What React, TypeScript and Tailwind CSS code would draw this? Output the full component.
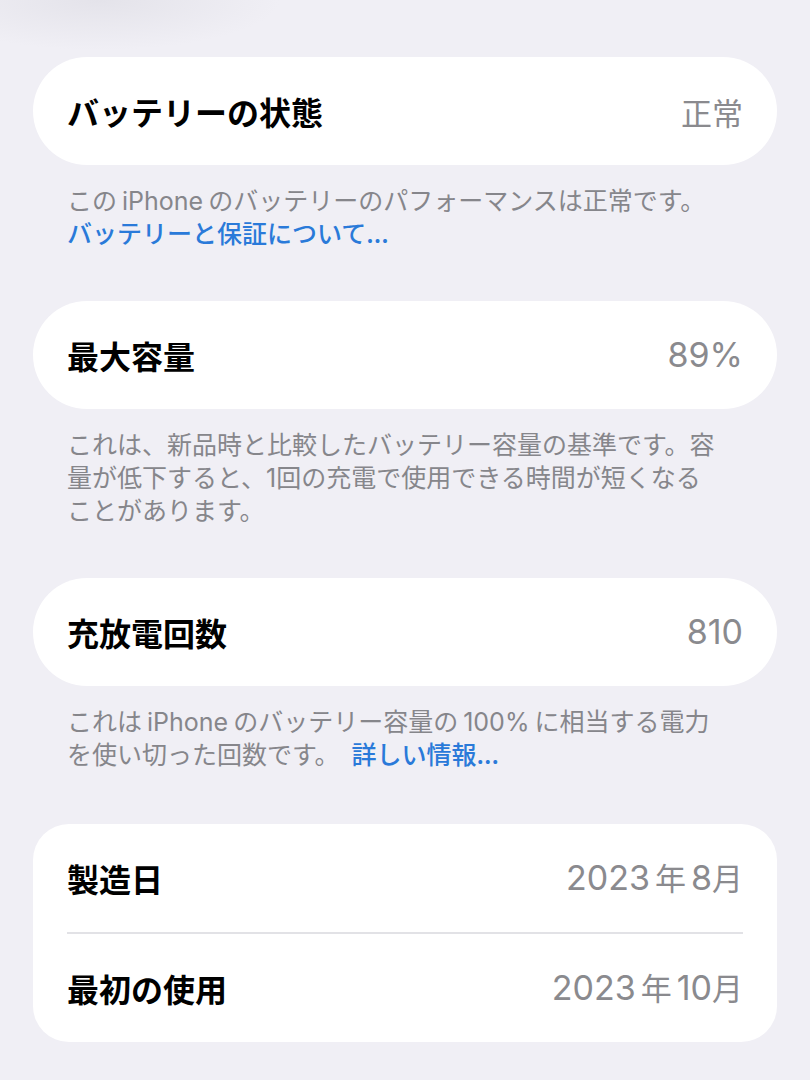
const font = { fontFamily: '"Noto Sans CJK JP", "Noto Sans", sans-serif' };
const latin = { fontFamily: 'Inter, "Noto Sans CJK JP", sans-serif' };

function Row({ label, value }: { label: string; value: React.ReactNode }) {
  return (
    <div className="flex h-[108px] items-center justify-between px-[34px]">
      <span className="text-[32px] font-bold leading-none text-black">{label}</span>
      <span className="text-[31px] leading-none text-[#8a8a8e]">{value}</span>
    </div>
  );
}

// digits in the value column run a bit larger than the kanji
function N({ children }: { children: React.ReactNode }) {
  return (
    <span style={latin} className="text-[34px] leading-none">
      {children}
    </span>
  );
}

// latin run with the little gap iOS puts round it
function L({ children, gap = true }: { children: React.ReactNode; gap?: boolean }) {
  return (
    <span style={latin} className={gap ? 'mx-[5px] leading-none' : 'leading-none'}>
      {children}
    </span>
  );
}

function Footer({ children }: { children: React.ReactNode }) {
  return (
    <p className="mt-[18px] px-[34px] text-[25px] leading-[33px] text-[#86868b]">{children}</p>
  );
}

export default function App() {
  return (
    <div
      style={font}
      className="min-h-[1080px] w-[810px] bg-[#f0eff5] bg-[radial-gradient(ellipse_180px_50px_at_100px_0px,#e4e3ea,transparent)] px-[33px] pt-[57px]"
    >
      <div className="rounded-full bg-white">
        <Row label="バッテリーの状態" value="正常" />
      </div>
      <Footer>
        この<L>iPhone</L>のバッテリーのパフォーマンスは正常です。
        <br />
        <span className="font-medium text-[#2a7ad9]">バッテリーと保証について...</span>
      </Footer>

      <div className="mt-[52px] rounded-full bg-white">
        <Row label="最大容量" value={<N>89%</N>} />
      </div>
      <Footer>
        これは、新品時と比較したバッテリー容量の基準です。容
        <br />
        量が低下すると、<L gap={false}>1</L>回の充電で使用できる時間が短くなる
        <br />
        ことがあります。
      </Footer>

      <div className="mt-[52px] rounded-full bg-white">
        <Row label="充放電回数" value={<N>810</N>} />
      </div>
      <Footer>
        これは<L>iPhone</L>のバッテリー容量の<L>100%</L>に相当する電力
        <br />
        を使い切った回数です。
        <span className="ml-3 font-medium text-[#2a7ad9]">詳しい情報...</span>
      </Footer>

      <div className="mt-[54px] rounded-[36px] bg-white">
        <Row
          label="製造日"
          value={
            <>
              <N>2023</N>
              <span className="mx-[5px]">年</span>
              <N>8</N>月
            </>
          }
        />
        <div className="mx-[34px] h-[2px] bg-[#e2e2e6]" />
        <Row
          label="最初の使用"
          value={
            <>
              <N>2023</N>
              <span className="mx-[5px]">年</span>
              <N>10</N>月
            </>
          }
        />
      </div>
    </div>
  );
}
